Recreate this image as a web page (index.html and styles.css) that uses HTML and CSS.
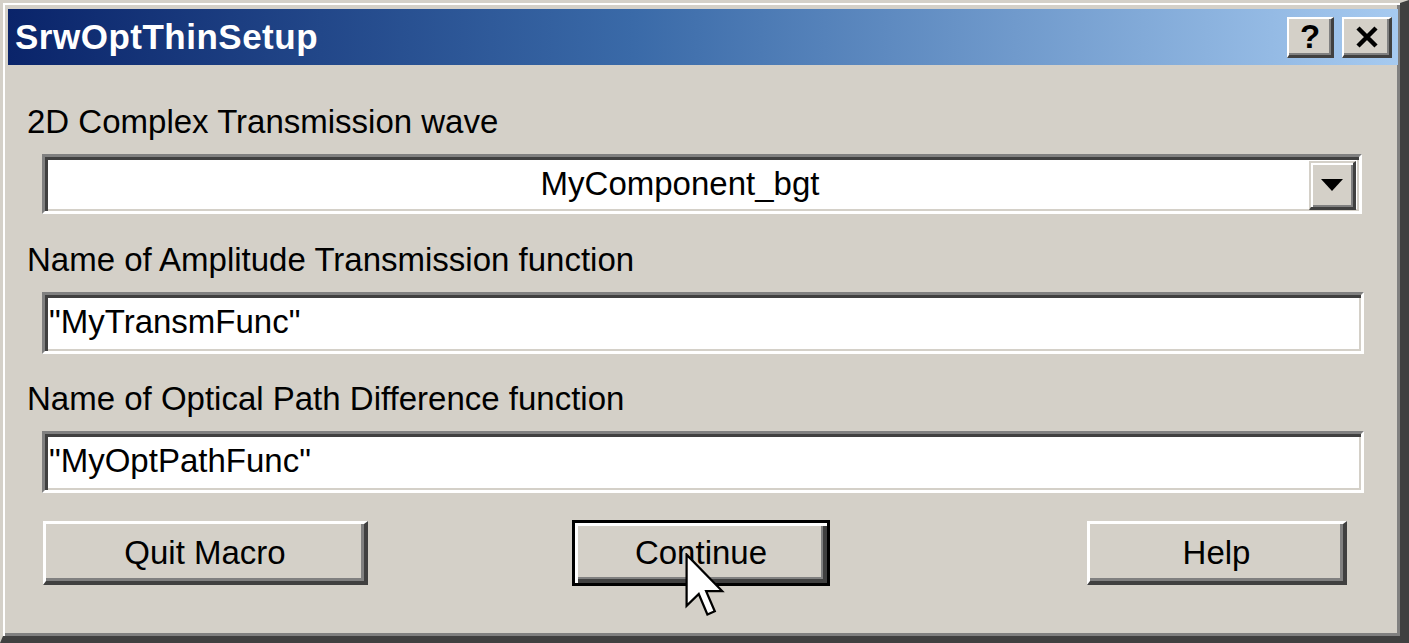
FILE: index.html
```html
<!DOCTYPE html>
<html>
<head>
<meta charset="utf-8">
<link rel="stylesheet" href="styles.css">
</head>
<body>
<div class="window">
  <div class="titlebar">
    <span class="title">SrwOptThinSetup</span>
    <div class="tb-buttons">
      <div class="tb-btn">?</div>
      <div class="tb-btn close">
        <svg width="24" height="22" viewBox="0 0 24 22"><path d="M3 2 L21 20 M21 2 L3 20" stroke="#000" stroke-width="4.5" fill="none"/></svg>
      </div>
    </div>
  </div>
  <div class="content">
    <div class="label">2D Complex Transmission wave</div>
    <div class="field combo">
      <span class="combo-text">MyComponent_bgt</span>
      <div class="drop-btn">
        <svg width="22" height="12" viewBox="0 0 22 12"><path d="M0 0 H22 L11 12 Z" fill="#000"/></svg>
      </div>
    </div>
    <div class="label l2">Name of Amplitude Transmission function</div>
    <div class="field input">"MyTransmFunc"</div>
    <div class="label l3">Name of Optical Path Difference function</div>
    <div class="field input">"MyOptPathFunc"</div>
    <div class="buttons">
      <div class="btn quit">Quit Macro</div>
      <div class="btn default">Continue</div>
      <div class="btn help">Help</div>
    </div>
  </div>
  <svg class="cursor" width="40" height="64" viewBox="0 0 12.5 20"><path d="M0.5 0.5 L0.5 16.5 L4.3 12.8 L7 19.2 L9.3 18.2 L6.6 11.9 L11.6 11.9 Z" fill="#fff" stroke="#000" stroke-width="0.7" stroke-linejoin="miter"/></svg>
</div>
</body>
</html>
```
FILE: styles.css
```css
html, body {
  margin: 0;
  padding: 0;
  background: #d4d0c8;
}
body {
  width: 1409px;
  height: 643px;
  overflow: hidden;
  font-family: "Liberation Sans", Arial, sans-serif;
}
.window {
  position: relative;
  box-sizing: border-box;
  width: 1409px;
  height: 643px;
  background: #d4d0c8;
  border-style: solid;
  border-width: 3px 9px 7px 3px;
  border-color: #d4d0c8 #404040 #404040 #d4d0c8;
  box-shadow: inset 2px 2px 0 #ffffff, inset -3px -3px 0 #808080;
  padding: 6px 2px 0 5px;
}
.titlebar {
  height: 56px;
  background: linear-gradient(to right, #0a246a 0%, #3a6aa8 45%, #a6caf0 100%);
  display: flex;
  align-items: center;
  justify-content: space-between;
  padding: 0 6px 0 7px;
}
.title {
  color: #fff;
  font-weight: bold;
  font-size: 35px;
  letter-spacing: 0.5px;
}
.tb-buttons {
  display: flex;
  gap: 8px;
  align-items: center;
}
.tb-btn {
  box-sizing: border-box;
  width: 47px;
  height: 41px;
  background: #d4d0c8;
  border-style: solid;
  border-width: 2px 3px 3px 2px;
  border-color: #ffffff #404040 #404040 #ffffff;
  box-shadow: inset -2px -2px 0 #808080;
  display: flex;
  align-items: center;
  justify-content: center;
  font-weight: bold;
  font-size: 33px;
  color: #000;
}
.tb-btn.close {
  width: 50px;
}
.content {
  display: flex;
  flex-direction: column;
  padding: 37px 34px 0 19px;
}
.label {
  height: 40px;
  line-height: 40px;
  font-size: 33px;
  color: #000;
  margin-bottom: 12px;
}
.l2 { margin-top: 26px; }
.l3 { margin-top: 25px; }
.field {
  box-sizing: border-box;
  margin-left: 15px;
  background: #fff;
  border-style: solid;
  border-width: 3px;
  border-color: #808080 #ffffff #ffffff #808080;
  box-shadow: inset 3px 3px 0 #404040, inset -2px -2px 0 #d4d0c8;
}
.combo {
  height: 60px;
  margin-right: 2px;
  display: flex;
  align-items: center;
  position: relative;
  padding: 0 3px 0 6px;
}
.combo-text {
  flex: 1;
  text-align: center;
  font-size: 33px;
}
.drop-btn {
  box-sizing: border-box;
  width: 47px;
  height: 49px;
  margin-top: 2px;
  background: #d4d0c8;
  border-style: solid;
  border-width: 2px 3px 3px 2px;
  border-color: #d4d0c8 #404040 #404040 #d4d0c8;
  box-shadow: inset 2px 2px 0 #ffffff, inset -2px -2px 0 #808080;
  display: flex;
  align-items: center;
  justify-content: center;
}
.input {
  height: 62px;
  line-height: 54px;
  font-size: 33px;
  padding-left: 4px;
}
.buttons {
  display: flex;
  justify-content: space-between;
  align-items: center;
  margin: 27px 17px 0 16px;
}
.btn {
  box-sizing: border-box;
  height: 64px;
  background: #d4d0c8;
  border-style: solid;
  border-width: 3px 4px 4px 3px;
  border-color: #ffffff #404040 #404040 #ffffff;
  box-shadow: inset -3px -3px 0 #808080;
  display: flex;
  align-items: center;
  justify-content: center;
  font-size: 33px;
  color: #000;
}
.quit { width: 325px; }
.help { width: 260px; }
.default {
  width: 258px;
  height: 66px;
  margin-right: 53px;
  border-width: 3px;
  border-color: #000;
  box-shadow: inset 3px 3px 0 #ffffff, inset -4px -4px 0 #404040, inset -6px -6px 0 #808080;
}
.cursor {
  position: absolute;
  left: 682px;
  top: 550px;
}
```
